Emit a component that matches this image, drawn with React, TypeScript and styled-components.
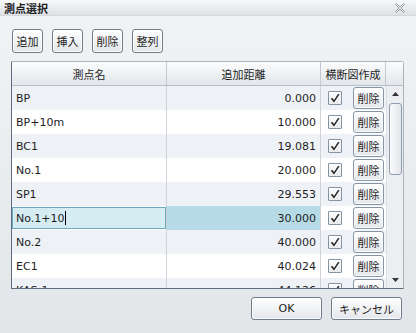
import React from 'react';
import styled, { createGlobalStyle } from 'styled-components';

const GlobalStyle = createGlobalStyle`
  html, body {
    margin: 0;
    padding: 0;
  }
  body {
    font-family: "DejaVu Sans", "Noto Sans CJK JP", sans-serif;
  }
`;

const Dialog = styled.div`
  width: 416px;
  height: 333px;
  display: flex;
  flex-direction: column;
  overflow: hidden;
  color: #1e1e1e;
  font-size: 11px;
  background: linear-gradient(#f1f3f5, #e3e6e9);
`;

const TitleBar = styled.div`
  height: 15px;
  flex: none;
  display: flex;
  align-items: center;
  justify-content: space-between;
  padding: 0 11px 0 4px;
  background: linear-gradient(#f8f9fa, #dde1e5);
  border-bottom: 1px solid #d3d8dd;
  font-weight: bold;
  font-size: 11px;
`;

const Toolbar = styled.div`
  display: flex;
  gap: 9px;
  padding: 13px 0 0 12px;
`;

const ToolButton = styled.button<{ $w?: number; $h?: number }>`
  box-sizing: border-box;
  width: ${p => p.$w ?? 31}px;
  height: ${p => p.$h ?? 24}px;
  padding: 0;
  border: 1px solid #6f7d8c;
  border-radius: 3px;
  background: linear-gradient(#fefefe, #e4e7eb);
  box-shadow: inset 0 0 0 1px rgba(255, 255, 255, 0.8);
  font-family: "DejaVu Sans", "Noto Sans CJK JP", sans-serif;
  font-size: 11px;
  color: #1e1e1e;
`;

const Table = styled.div`
  box-sizing: border-box;
  width: 393px;
  height: 228px;
  margin: 8px 0 0 11px;
  display: flex;
  flex-direction: column;
  border: 1px solid #aab3bc;
  border-left-color: #5e6c7b;
  border-bottom-color: #5e6c7b;
  border-top-right-radius: 3px;
  background: #fff;
`;

const HeaderRow = styled.div`
  box-sizing: border-box;
  height: 24px;
  flex: none;
  display: grid;
  grid-template-columns: 155px 154px 65px 1fr;
  border-bottom: 1px solid #b7bec6;
  background: linear-gradient(#fbfcfc, #e2e6ea);
`;

const HeadCell = styled.div`
  display: flex;
  align-items: center;
  justify-content: center;
  border-right: 1px solid #c3c9cf;
  &:last-child {
    border-right: none;
  }
`;

const Body = styled.div`
  flex: 1;
  display: flex;
  min-height: 0;
`;

const Rows = styled.div`
  width: 374px;
  overflow: hidden;
`;

const Row = styled.div<{ $alt: boolean }>`
  height: 24px;
  display: grid;
  grid-template-columns: 155px 154px 65px;
  background: ${p => (p.$alt ? '#eef2f7' : '#ffffff')};
`;

const NameCell = styled.div`
  display: flex;
  align-items: center;
  padding-left: 4px;
  border-right: 1px solid #cfd3d7;
  &[data-edit='true'] {
    padding-left: 0;
  }
`;

const EditBox = styled.div`
  box-sizing: border-box;
  flex: 1;
  height: 22px;
  display: flex;
  align-items: center;
  padding-left: 3px;
  border: 1px solid #6aa9be;
  background: #d6ecf3;
`;

const Caret = styled.span`
  width: 1px;
  height: 14px;
  margin-left: 1px;
  background: #000;
`;

const DistCell = styled.div<{ $sel: boolean }>`
  display: flex;
  align-items: center;
  justify-content: flex-end;
  padding-right: 4px;
  border-right: 1px solid #cfd3d7;
  background: ${p => (p.$sel ? '#b7dbe6' : 'transparent')};
`;

const CheckCell = styled.div`
  display: flex;
  align-items: center;
  padding-left: 7px;
`;

const CheckBox = styled.span`
  box-sizing: border-box;
  width: 14px;
  height: 14px;
  display: flex;
  align-items: center;
  justify-content: center;
  border: 1px solid #8494a5;
  border-radius: 1px;
  background: linear-gradient(#ffffff, #e8ebee);
`;

const RowButton = styled(ToolButton)`
  margin-left: auto;
  margin-right: 2px;
  border-color: #8595a6;
`;

const ScrollBar = styled.div`
  flex: 1;
  display: flex;
  flex-direction: column;
  align-items: center;
  background: #eceef1;
  border-left: 1px solid #dce0e4;
`;

const ScrollArrow = styled.div`
  height: 16px;
  flex: none;
  display: flex;
  align-items: center;
  justify-content: center;
`;

const Thumb = styled.div`
  box-sizing: border-box;
  width: 13px;
  height: 72px;
  margin-top: 1px;
  border: 1px solid #8f9cab;
  border-radius: 3px;
  background: linear-gradient(to right, #fbfbfc, #e2e5e9);
`;

const Spacer = styled.div`
  flex: 1;
`;

const Footer = styled.div`
  display: flex;
  justify-content: flex-end;
  gap: 9px;
  padding: 8px 14px 0 0;
`;

const CloseIcon = () => (
  <svg width="10" height="10" viewBox="0 0 10 10">
    <polygon
      points="0.5,1.5 1.5,0.5 5,4 8.5,0.5 9.5,1.5 6,5 9.5,8.5 8.5,9.5 5,6 1.5,9.5 0.5,8.5 4,5"
      fill="#f2f3f4"
      stroke="#8e9194"
      strokeWidth="0.9"
    />
  </svg>
);

const Check = () => (
  <svg width="10" height="10" viewBox="0 0 10 10">
    <path d="M1.5 5.2 L4 8.3 L8.8 1.2" fill="none" stroke="#222" strokeWidth="1.5" />
  </svg>
);

const Arrow = ({ down }: { down?: boolean }) => (
  <svg width="7" height="4" viewBox="0 0 7 4">
    <polygon points={down ? '0,0 7,0 3.5,4' : '0,4 7,4 3.5,0'} fill="#333" />
  </svg>
);

const points = [
  { name: 'BP', dist: '0.000' },
  { name: 'BP+10m', dist: '10.000' },
  { name: 'BC1', dist: '19.081' },
  { name: 'No.1', dist: '20.000' },
  { name: 'SP1', dist: '29.553' },
  { name: 'No.1+10', dist: '30.000' },
  { name: 'No.2', dist: '40.000' },
  { name: 'EC1', dist: '40.024' },
  { name: 'KAS-1', dist: '44.126' },
];

const selected = 5;

export default function App() {
  return (
    <>
      <GlobalStyle />
      <Dialog>
        <TitleBar>
          <span>測点選択</span>
          <CloseIcon />
        </TitleBar>
        <Toolbar>
          <ToolButton>追加</ToolButton>
          <ToolButton>挿入</ToolButton>
          <ToolButton>削除</ToolButton>
          <ToolButton>整列</ToolButton>
        </Toolbar>
        <Table>
          <HeaderRow>
            <HeadCell>測点名</HeadCell>
            <HeadCell>追加距離</HeadCell>
            <HeadCell>横断図作成</HeadCell>
            <HeadCell />
          </HeaderRow>
          <Body>
            <Rows>
              {points.map((p, i) => (
                <Row key={p.name} $alt={i % 2 === 0 && i !== selected}>
                  {i === selected ? (
                    <NameCell data-edit="true">
                      <EditBox>
                        {p.name}
                        <Caret />
                      </EditBox>
                    </NameCell>
                  ) : (
                    <NameCell>{p.name}</NameCell>
                  )}
                  <DistCell $sel={i === selected}>{p.dist}</DistCell>
                  <CheckCell>
                    <CheckBox>
                      <Check />
                    </CheckBox>
                    <RowButton $h={22}>削除</RowButton>
                  </CheckCell>
                </Row>
              ))}
            </Rows>
            <ScrollBar>
              <ScrollArrow>
                <Arrow />
              </ScrollArrow>
              <Thumb />
              <Spacer />
              <ScrollArrow>
                <Arrow down />
              </ScrollArrow>
            </ScrollBar>
          </Body>
        </Table>
        <Footer>
          <ToolButton $w={71} $h={23}>OK</ToolButton>
          <ToolButton $w={71} $h={23}>キャンセル</ToolButton>
        </Footer>
      </Dialog>
    </>
  );
}
